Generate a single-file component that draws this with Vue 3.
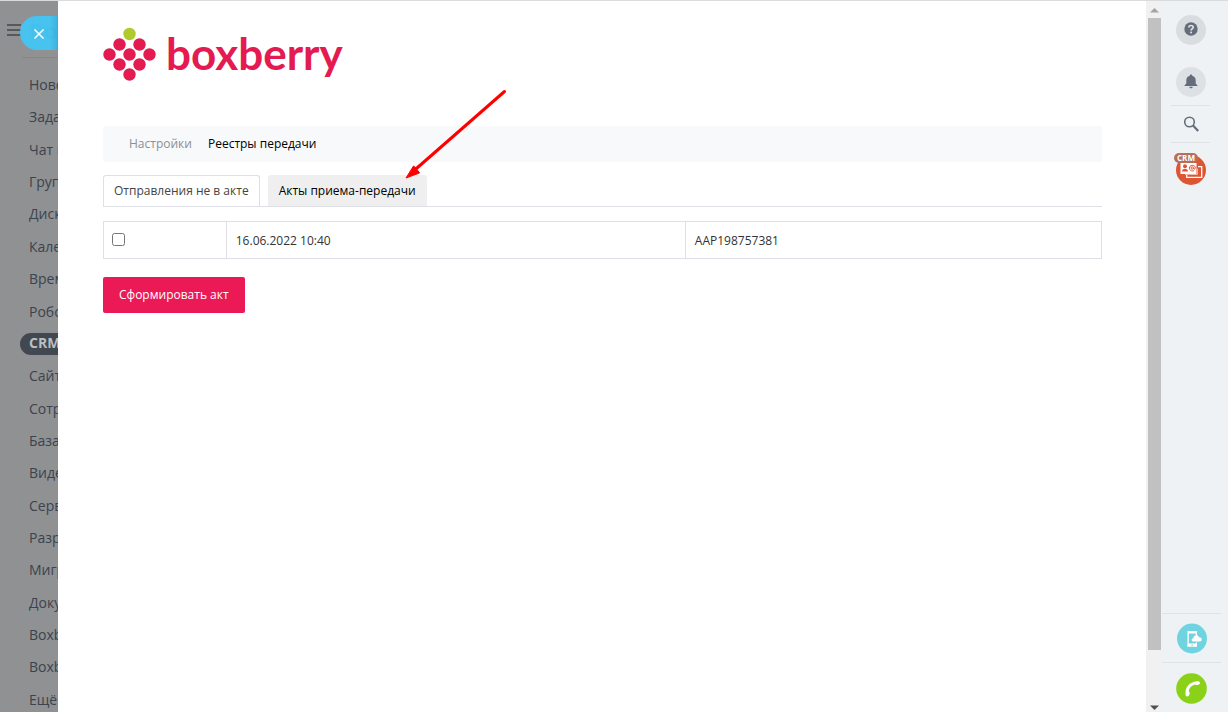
<script setup>
import { ref } from 'vue'

const menu = [
  'Ново', 'Зада', 'Чат и', 'Групп', 'Диск', 'Кале', 'Врем', 'Робо', 'CRM', 'Сайт',
  'Сотр', 'База', 'Виде', 'Серв', 'Разр', 'Мигр', 'Доку', 'Boxb', 'Boxb', 'Ещё'
]
const acts = ref([{ date: '16.06.2022 10:40', code: 'AAP198757381', checked: false }])
const berries = [
  [16, 17], [36, 17], [6, 27], [26, 27], [46, 27], [16, 37], [36, 37], [26, 47]
]
</script>

<template>
  <div class="page">
    <aside class="side">
      <header class="side-head">
        <button class="burger" aria-label="Меню"><i></i><i></i><i></i></button>
        <span class="brand">Box</span>
        <button class="close" aria-label="Закрыть">
          <svg width="12" height="12" viewBox="0 0 12 12"><path d="M1.5 1.5l9 9M10.5 1.5l-9 9" stroke="#fff" stroke-width="1.5" /></svg>
        </button>
      </header>
      <nav class="menu">
        <a v-for="(m, i) in menu" :key="i" href="#" :class="{ active: m === 'CRM' }">{{ m }}</a>
      </nav>
    </aside>

    <main class="panel">
      <div class="logo">
        <svg width="54" height="54" viewBox="0 0 54 54" aria-hidden="true">
          <circle cx="26.5" cy="7" r="6.2" fill="#b0ca2c" />
          <circle v-for="(b, i) in berries" :key="i" :cx="b[0] + 0.5" :cy="b[1] + 0.5" r="6.2" fill="#e31b51" />
        </svg>
        <span class="wordmark">boxberry</span>
      </div>

      <nav class="crumbs">
        <a href="#">Настройки</a>
        <a href="#" class="current">Реестры передачи</a>
      </nav>

      <div class="tabs">
        <button class="tab">Отправления не в акте</button>
        <button class="tab selected">Акты приема-передачи</button>
        <svg class="arrow" width="104" height="92" viewBox="0 0 104 92" aria-hidden="true">
          <path d="M99.500 3.500L12 80" stroke="#f00" stroke-width="3" stroke-linecap="round" />
          <path d="M1 90L8.500 78L11 80L14.500 85Z" fill="#f00" stroke="#f00" stroke-width="1" />
        </svg>
      </div>

      <table class="acts">
        <colgroup><col class="c1" /><col class="c2" /><col class="c3" /></colgroup>
        <tbody>
          <tr v-for="a in acts" :key="a.code">
            <td><input v-model="a.checked" type="checkbox" :aria-label="a.code" /></td>
            <td>{{ a.date }}</td>
            <td>{{ a.code }}</td>
          </tr>
        </tbody>
      </table>

      <button class="submit">Сформировать акт</button>
    </main>

    <div class="scroll" aria-hidden="true">
      <svg width="16" height="17" viewBox="0 0 16 17"><path d="M4 11.500L8.500 7L13 11.500Z" fill="#a3a3a3" /></svg>
      <div class="track"><div class="thumb"></div></div>
      <svg width="16" height="14" viewBox="0 0 16 14"><path d="M4 7.500L8.500 12L13 7.500Z" fill="#505050" /></svg>
    </div>

    <aside class="rail">
      <button class="round help" aria-label="Помощь">
        <svg width="14" height="16" viewBox="0 0 14 16">
          <circle cx="7" cy="7" r="6.700" fill="#656d7b" />
          <path d="M4.900 5.500C4.900 2.800 9.200 2.900 9.200 5.300C9.200 6.800 7.100 6.800 7.100 8.600" fill="none" stroke="#dde1e5" stroke-width="1.700" />
          <rect x="6.200" y="9.600" width="1.800" height="1.700" fill="#dde1e5" />
        </svg>
      </button>
      <button class="round bell" aria-label="Уведомления">
        <svg width="14" height="16" viewBox="0 0 14 16">
          <path d="M7 0.500c.8 0 1.200.5 1.200 1.200C10.700 2.300 11.700 4 11.700 6.500V9.500L13.500 11.500V12H.5V11.500L2.300 9.500V6.500C2.300 4 3.300 2.300 5.800 1.700C5.800 1 6.200.5 7 .5Z" fill="#656d7b" />
          <path d="M5.300 12.700h3.400C8.700 14.700 5.300 14.700 5.300 12.700Z" fill="#656d7b" />
        </svg>
      </button>
      <button class="search" aria-label="Поиск">
        <svg width="16" height="16" viewBox="0 0 16 16" fill="none" stroke="#656d7b">
          <circle cx="6.500" cy="6" r="4.800" stroke-width="1.600" /><path d="M10 9.500L15.200 15" stroke-width="2.200" />
        </svg>
      </button>
      <button class="crm" aria-label="CRM">
        <svg width="34" height="34" viewBox="0 0 34 34">
          <circle cx="18" cy="18" r="15" fill="#dd5533" />
          <path d="M25 14.700H28.700V25.300H13.700V23" fill="none" stroke="#fff" stroke-width="1.300" />
          <path d="M24.500 16.500V22.500H12" fill="none" stroke="#f0b5a5" stroke-width="1" />
          <rect x="7.500" y="11" width="16" height="11" fill="#fff" />
          <circle cx="12" cy="14.200" r="2" fill="#dd5533" />
          <path d="M9 19.500C9 15.700 15 15.700 15 19.500Z" fill="#dd5533" />
          <circle cx="19.300" cy="16" r="1.200" fill="none" stroke="#dd5533" />
          <path d="M21.200 18.500C18.800 19.700 16.400 18.300 16.400 16C16.400 12.500 22.300 12.500 22.300 15.800C22.300 17.500 20.600 17.300 20.500 16" fill="none" stroke="#dd5533" />
        </svg>
        <span class="tag">CRM</span>
      </button>
      <div class="bottom">
        <button class="device" aria-label="Мобильное приложение">
          <svg width="31" height="31" viewBox="0 0 31 31">
            <circle cx="15" cy="15.500" r="15" fill="#70d4e0" />
            <path d="M10.500 8h9.500v5h-1.300v-2.500H11.800V20.500h6.900V19.500h1.300V23.500H10.500Z" fill="#fff" />
            <path d="M10.500 21h9.500v2.600H10.500Z" fill="#fff" /><rect x="14.200" y="21.700" width="2" height="1" fill="#70d4e0" />
            <path d="M16.500 18.500C14.200 18.500 14 15.500 16.300 15.200C16.500 12 21 11.200 22 14.200C25.500 14 25.700 18.500 22.600 18.500Z" fill="#fff" />
          </svg>
        </button>
        <button class="phone" aria-label="Позвонить">
          <svg width="31" height="31" viewBox="0 0 31 31">
            <circle cx="15.500" cy="15.500" r="15.300" fill="#8bd019" />
            <path d="M9.500 21C9 14.500 13.500 9.500 19.500 8.600C21.500 7.300 23.800 8.500 24 10C23.700 12 20.500 12.700 19.200 11.500C15.500 12.500 13 15 12.700 18.300C14.300 19 13.800 22.800 11.800 23.500C10 23.700 9.200 22.300 9.500 21Z" fill="#fff" />
          </svg>
        </button>
      </div>
    </aside>
  </div>
</template>

<style>
body { margin: 0; }
</style>

<style scoped>
* { box-sizing: border-box; }
.page {
  display: flex;
  height: 100vh;
  border-top: 1px solid #d9dbdd;
  font-family: "Open Sans", "Noto Sans", sans-serif;
  background: #fff;
}
button { font: inherit; border: 0; padding: 0; background: none; cursor: pointer; }
a { text-decoration: none; color: inherit; }
svg { display: block; }

.side {
  flex: none;
  width: 58px;
  overflow: hidden;
  background: #8f9193;
  display: flex;
  flex-direction: column;
}
.side-head { position: relative; flex: none; height: 73px; }
.side-head::after { content: ""; position: absolute; left: 22px; right: 0; top: 56px; height: 1px; background: #858789; }
.burger { position: absolute; left: 7px; top: 23px; width: 14px; display: grid; gap: 3px; }
.burger i { height: 2px; background: #55595e; }
.brand { position: absolute; left: 29px; top: 15px; font-size: 22px; line-height: 28px; font-weight: 700; color: #3d434b; }
.close {
  position: absolute; left: 20px; right: 1px; top: 15px; height: 34px;
  padding: 2px 0 0 13px;
  border-radius: 17px 0 0 17px;
  background: linear-gradient(to right, rgba(69, 197, 243, 0.96) 80%, rgba(60, 180, 226, 0.96));
}
.menu {
  flex: 1;
  display: flex;
  flex-direction: column;
  justify-content: space-between;
  padding-left: 20px;
  padding-bottom: 1px;
}
.menu a {
  height: 22px;
  padding-left: 9px;
  font-size: 14px;
  line-height: 22px;
  white-space: nowrap;
  color: #3c434d;
}
.menu .active { line-height: 20px; background: #42484f; color: #bcbebf; font-weight: 700; border-radius: 11px 0 0 11px; }

.panel { flex: 1; min-width: 0; padding: 26px 44px 0 45px; font-size: 12px; color: #525c69; }
.logo { display: flex; gap: 9px; height: 99px; }
.wordmark { font-family: Lato, sans-serif; font-weight: 700; font-size: 44px; line-height: 52px; color: #e31b51; }
.crumbs {
  display: flex; align-items: center; gap: 16px;
  height: 36px; padding: 0 26px 2px;
  border-radius: 3px; background: #f8f9fb; color: #8c8f94;
}
.crumbs .current { color: #000; }
.tabs { position: relative; display: flex; gap: 8px; margin-top: 13px; border-bottom: 1px solid #dfe0e6; }
.tab { height: 31px; padding: 0 10px 1px; border: 1px solid #dfe0e6; border-bottom: 0; border-radius: 3px 3px 0 0; color: #444; }
.selected { background: #efefef; border-color: #efefef; color: #000; }
.arrow { position: absolute; left: 302px; bottom: 26px; }
.acts { width: 100%; table-layout: fixed; border-collapse: collapse; margin-top: 14px; }
.acts td { height: 37px; padding: 0 9px; border: 1px solid #dfe0e6; color: #333; }
.acts td:first-child { padding: 0 8px 2px; }
.acts input { display: block; width: 13px; height: 13px; margin: 0; }
.c1 { width: 12.3%; }
.c2 { width: 46%; }
.submit { display: block; height: 36px; margin-top: 18px; padding: 0 16px 1px; border-radius: 2px; background: #eb1a57; color: #fff; }

.scroll { flex: none; width: 16px; background: #f1f1f1; display: flex; flex-direction: column; }
.track { flex: 1; padding: 0 1px 0 2px; }
.thumb { height: 93%; background: #c1c1c1; }

.rail { flex: none; width: 66px; background: #eef2f5; display: flex; flex-direction: column; padding-top: 14px; }
.rail > button { margin-left: 14px; }
.round { width: 30px; height: 30px; border-radius: 50%; display: grid; place-items: center; background: #dde1e6; }
.help { background: #d9dde0; }
.bell { margin-top: 22px; }
.rail > .search { margin: 8px 18px 0 9px; height: 38px; border: solid #dfe3e6; border-width: 1px 0; display: grid; place-items: center; }
.rail > .crm { position: relative; width: 34px; margin: 9px 0 0 11px; }
.tag {
  position: absolute; left: 1px; top: 1px; padding: 0 3px;
  border-radius: 5px; background: #b5705a; color: #fff;
  font-size: 8px; line-height: 10px; font-weight: 700;
}
.bottom { margin-top: auto; padding-right: 7px; }
.bottom button { display: block; width: 100%; height: 49px; padding-left: 14px; border-top: 1px solid #dfe3e6; }
.bottom .device { padding-left: 15px; }
.bottom .phone { height: 50px; padding-top: 2px; }
</style>
